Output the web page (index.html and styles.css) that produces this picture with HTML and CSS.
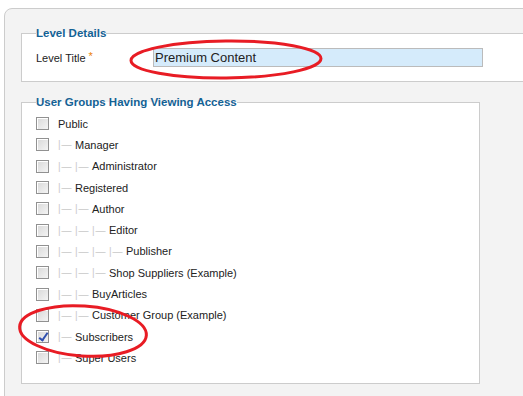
FILE: index.html
```html
<!DOCTYPE html>
<html lang="en">
<head>
    <meta charset="UTF-8">
    <title>Edit Viewing Access Level</title>
    <link rel="stylesheet" href="styles.css">
</head>
<body>

    <!-- Main panel -->
    <div class="panel">

        <!-- Level details -->
        <fieldset class="box box-details">
            <legend>Level Details</legend>
            <div class="field">
                <label class="field-label" for="title">Level Title <span class="star">*</span></label>
                <input class="field-input" type="text" id="title" value="Premium Content">
            </div>
        </fieldset>

        <!-- User groups -->
        <fieldset class="box box-groups">
            <legend>User Groups Having Viewing Access</legend>
            <ul class="groups">
                <li><input type="checkbox"><span class="name">Public</span></li>
                <li><input type="checkbox"><span class="gi">|&mdash;</span><span class="name">Manager</span></li>
                <li><input type="checkbox"><span class="gi">|&mdash;</span><span class="gi">|&mdash;</span><span class="name">Administrator</span></li>
                <li><input type="checkbox"><span class="gi">|&mdash;</span><span class="name">Registered</span></li>
                <li><input type="checkbox"><span class="gi">|&mdash;</span><span class="gi">|&mdash;</span><span class="name">Author</span></li>
                <li><input type="checkbox"><span class="gi">|&mdash;</span><span class="gi">|&mdash;</span><span class="gi">|&mdash;</span><span class="name">Editor</span></li>
                <li><input type="checkbox"><span class="gi">|&mdash;</span><span class="gi">|&mdash;</span><span class="gi">|&mdash;</span><span class="gi">|&mdash;</span><span class="name">Publisher</span></li>
                <li><input type="checkbox"><span class="gi">|&mdash;</span><span class="gi">|&mdash;</span><span class="gi">|&mdash;</span><span class="name">Shop Suppliers (Example)</span></li>
                <li><input type="checkbox"><span class="gi">|&mdash;</span><span class="gi">|&mdash;</span><span class="name">BuyArticles</span></li>
                <li><input type="checkbox"><span class="gi">|&mdash;</span><span class="gi">|&mdash;</span><span class="name">Customer Group (Example)</span></li>
                <li><input type="checkbox" checked><span class="gi">|&mdash;</span><span class="name">Subscribers</span></li>
                <li><input type="checkbox"><span class="gi">|&mdash;</span><span class="name">Super Users</span></li>
            </ul>
        </fieldset>
    </div>

    <!-- Red annotation marks drawn over the screenshot -->
    <svg class="marks" width="523" height="396" viewBox="0 0 523 396">
        <ellipse cx="226" cy="59.5" rx="95" ry="18.5" transform="rotate(-0.6 226 59.5)"/>
        <ellipse cx="83" cy="331" rx="63.5" ry="25" transform="rotate(4 83 331)"/>
    </svg>

</body>
</html>
```

FILE: styles.css
```css
body {
    margin: 0;
    background-color: #fff;
    font-family: "Liberation Sans", Arial, sans-serif;
    font-size: 11px;
    color: #222;
    overflow: hidden;
    position: relative;
    height: 396px;
}

.panel {
    margin: 8px 0 0 4px;
    width: 620px;
    height: 420px;
    padding: 17px 0 0 16px;
    background-color: #f3f3f3;
    border: 1px solid #ccc;
    border-radius: 8px 0 0 0;
}

/* Fieldsets */
.box {
    margin: 0 0 13px 0;
    padding: 0 14px;
    background-color: #fff;
    border: 1px solid #ccc;
}

.box legend {
    padding: 0;
    font-size: 11.5px;
    font-weight: bold;
    line-height: 14px;
    color: #146295;
}

.box-details {
    width: 600px;
    height: 54px;
}

.box-groups {
    width: 429px;
    height: 287px;
}

/* Level title row */
.field {
    display: flex;
    align-items: center;
    padding-top: 8px;
}

.field-label {
    width: 117px;
    color: #222;
}

.star {
    color: #eb8207;
    position: relative;
    top: -2px;
}

.field-input {
    width: 326px;
    height: 17px;
    margin: 0;
    padding: 0 1px;
    border: 1px solid #bbb;
    background-color: #d5ebfb;
    font-family: "Liberation Sans", Arial, sans-serif;
    font-size: 13px;
    color: #222;
    outline: none;
}

/* Group tree */
.groups {
    list-style: none;
    margin: 0;
    padding: 4px 0 0 0;
}

.groups li {
    display: flex;
    align-items: center;
    height: 21.3px;
}

.groups input {
    appearance: none;
    -webkit-appearance: none;
    width: 13px;
    height: 13px;
    margin: 0 9px 0 0;
    border: 1px solid #919191;
    background: linear-gradient(135deg, #d8d8d8, #f4f4f4);
    box-shadow: inset 1px 1px 0 #fff;
    position: relative;
}

.groups input:checked::after {
    content: "";
    position: absolute;
    left: 4px;
    top: 0;
    width: 3px;
    height: 8px;
    border: solid #2f4fae;
    border-width: 0 2px 2px 0;
    transform: rotate(35deg);
}

.gi {
    display: inline-block;
    width: 17px;
    color: #c9c9c9;
    font-size: 10px;
    letter-spacing: 1px;
}

.name {
    color: #222;
}

/* Annotation overlay */
.marks {
    position: absolute;
    top: 0;
    left: 0;
    pointer-events: none;
}

.marks ellipse {
    fill: none;
    stroke: #e81c24;
    stroke-width: 3;
}
```
